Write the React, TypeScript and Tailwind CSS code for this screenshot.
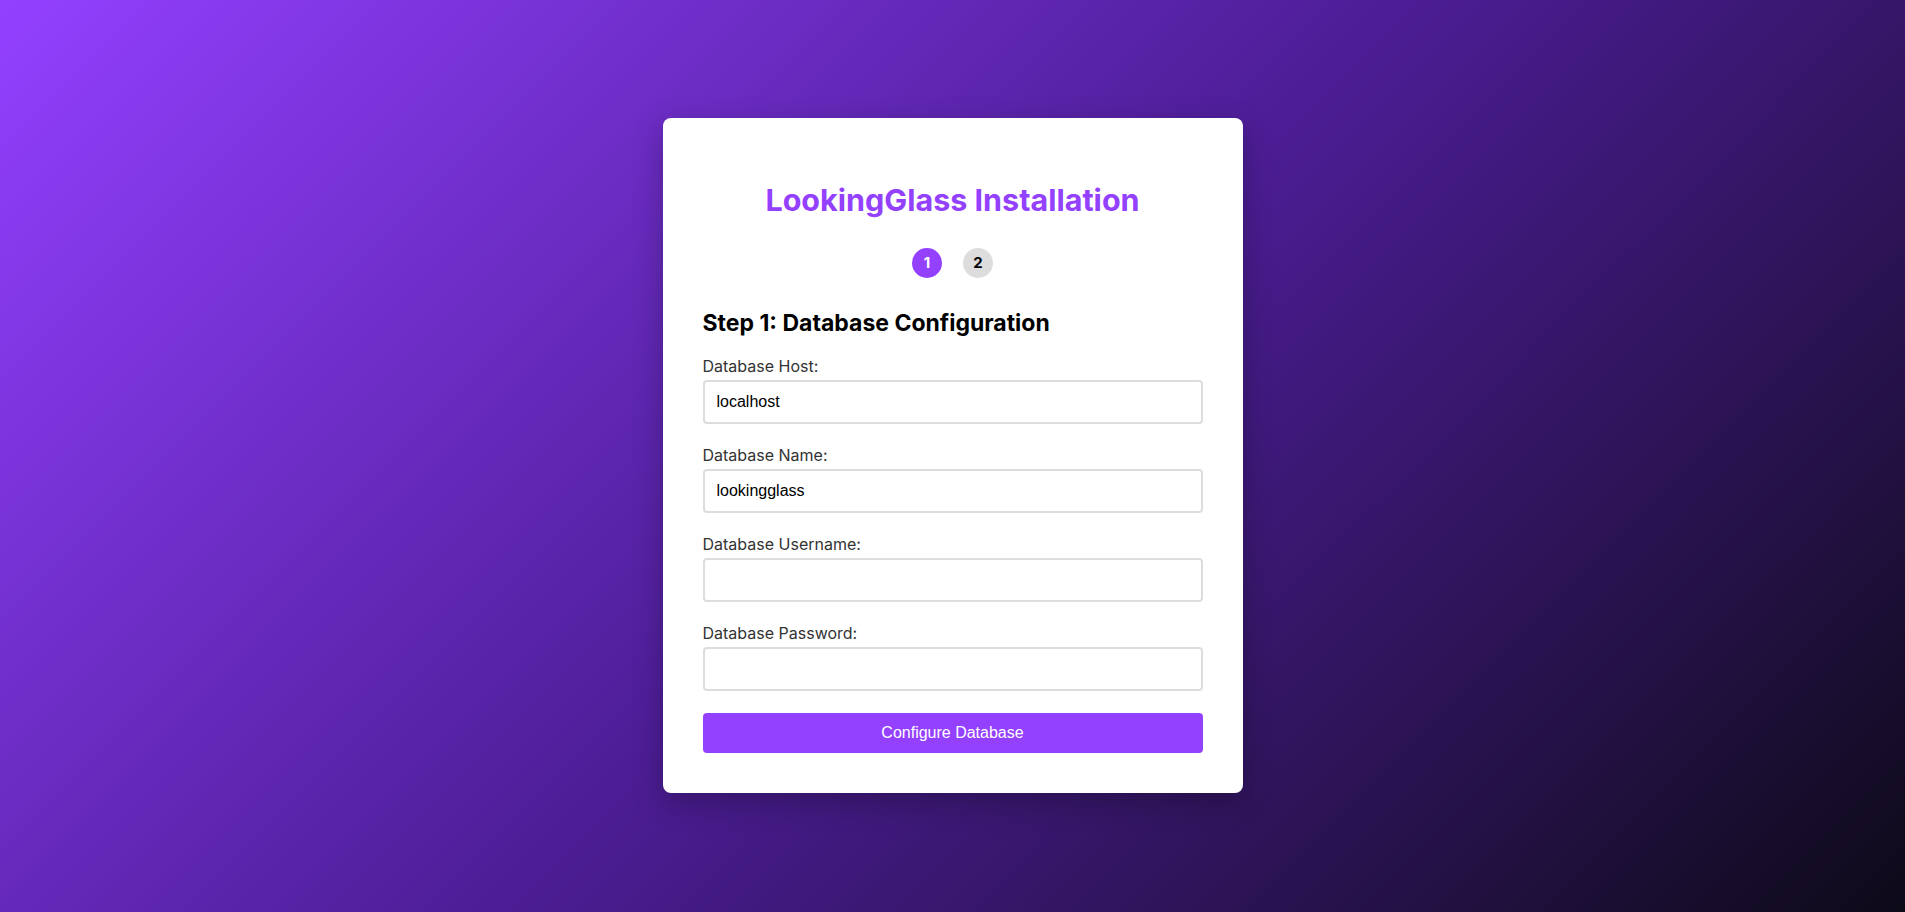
export default function App() {
  const fields = [
    { label: "Database Host:", value: "localhost", type: "text" },
    { label: "Database Name:", value: "lookingglass", type: "text" },
    { label: "Database Username:", value: "", type: "text" },
    { label: "Database Password:", value: "", type: "password" },
  ];

  return (
    <div className="min-h-screen w-full bg-[linear-gradient(135deg,#9340ff_0%,#4c1d95_50%,#0d0a18_100%)] flex justify-center pt-[118px] font-['Inter',sans-serif]">
      <div className="w-[580px] h-[675px] bg-white rounded-[8px] shadow-[0_10px_30px_rgba(0,0,0,0.25)] px-[40px] pt-[40px]">
        {/* Title */}
        <h1 className="mt-[23px] text-center text-[30.5px] leading-[38px] font-bold text-[#9340ff]">
          LookingGlass Installation
        </h1>

        {/* Steps */}
        <div className="mt-[29px] flex justify-center gap-[21px]">
          <div className="w-[30px] h-[30px] rounded-full bg-[#9340ff] text-white text-[15px] font-bold flex items-center justify-center">
            1
          </div>
          <div className="w-[30px] h-[30px] rounded-full bg-[#dddddd] text-black text-[15px] font-bold flex items-center justify-center">
            2
          </div>
        </div>

        <h2 className="mt-[31px] text-[23px] leading-[28px] font-bold text-black">
          Step 1: Database Configuration
        </h2>

        <form className="mt-[19px] flex flex-col">
          {fields.map((f) => (
            <div key={f.label} className="mb-[21px] flex flex-col">
              <label className="text-[16px] leading-[20px] text-[#333333] mb-[4px]">{f.label}</label>
              <input
                type={f.type}
                defaultValue={f.value}
                className="h-[44px] w-full border-2 border-[#dddddd] rounded-[4px] px-[12px] text-[16px] text-black font-['Liberation_Sans',Arial,sans-serif] outline-none"
              />
            </div>
          ))}
          <button
            type="button"
            className="mt-[1px] h-[40px] w-full rounded-[4px] bg-[#9340ff] text-white text-[16px] font-['Liberation_Sans',Arial,sans-serif]"
          >
            Configure Database
          </button>
        </form>
      </div>
    </div>
  );
}
